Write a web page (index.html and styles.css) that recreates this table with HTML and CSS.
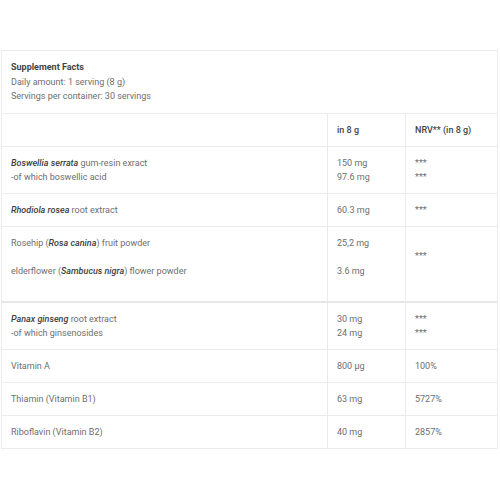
FILE: index.html
```html
<!DOCTYPE html>
<html>
<head>
<meta charset="utf-8">
<link rel="stylesheet" href="styles.css">
</head>
<body>
<div class="wrap">
<table class="facts">
  <tr class="head-row">
    <td colspan="3" class="head-cell">
      <div class="title">Supplement Facts</div>
      <div>Daily amount: 1 serving (8 g)</div>
      <div>Servings per container: 30 servings</div>
    </td>
  </tr>
  <tr>
    <td class="c1"></td>
    <td class="c2 colhead">in 8 g</td>
    <td class="c3 colhead">NRV** (in 8 g)</td>
  </tr>
  <tr>
    <td class="c1"><em>Boswellia serrata</em> gum-resin exract<br>-of which boswellic acid</td>
    <td class="c2">150 mg<br>97.6 mg</td>
    <td class="c3">***<br>***</td>
  </tr>
  <tr>
    <td class="c1"><em>Rhodiola rosea</em> root extract</td>
    <td class="c2">60.3 mg</td>
    <td class="c3">***</td>
  </tr>
  <tr class="thick">
    <td class="c1">Rosehip (<em>Rosa canina</em>) fruit powder<br><br>elderflower (<em>Sambucus nigra</em>) flower powder<br><br></td>
    <td class="c2">25,2 mg<br><br>3.6 mg<br><br></td>
    <td class="c3 nrv-mid">***</td>
  </tr>
  <tr>
    <td class="c1"><em>Panax ginseng</em> root extract<br>-of which ginsenosides</td>
    <td class="c2">30 mg<br>24 mg</td>
    <td class="c3">***<br>***</td>
  </tr>
  <tr>
    <td class="c1">Vitamin A</td>
    <td class="c2">800 µg</td>
    <td class="c3">100%</td>
  </tr>
  <tr>
    <td class="c1">Thiamin (Vitamin B1)</td>
    <td class="c2">63 mg</td>
    <td class="c3">5727%</td>
  </tr>
  <tr>
    <td class="c1">Riboflavin (Vitamin B2)</td>
    <td class="c2">40 mg</td>
    <td class="c3">2857%</td>
  </tr>
</table>
</div>
</body>
</html>
```
FILE: styles.css
```css
html, body {
  margin: 0;
  padding: 0;
  background: #ffffff;
}
.wrap {
  padding: 50px 2px 0 1px;
}
.facts {
  width: 497px;
  border-collapse: collapse;
  font-family: Roboto, "Liberation Sans", sans-serif;
  font-size: 9px;
  line-height: 14px;
  color: #6e6e6e;
}
.facts td {
  border: 1px solid #ebebeb;
  padding: 9px 9px 9px 9px;
  vertical-align: top;
  text-align: left;
}
.facts em {
  font-style: italic;
  font-weight: 500;
  color: #3d3d3d;
}
.head-cell {
  line-height: 14.5px;
  padding-bottom: 9.5px !important;
}
.title {
  font-weight: 700;
  color: #444444;
}
.c1 { width: 307px; }
.c2 { width: 59px; }
.c3 { width: 73px; }
.colhead {
  font-weight: 500;
  color: #444444;
}
.thick td {
  border-bottom: 2px solid #e6e6e6;
}
.nrv-mid {
  padding-top: 22px !important;
}
```
